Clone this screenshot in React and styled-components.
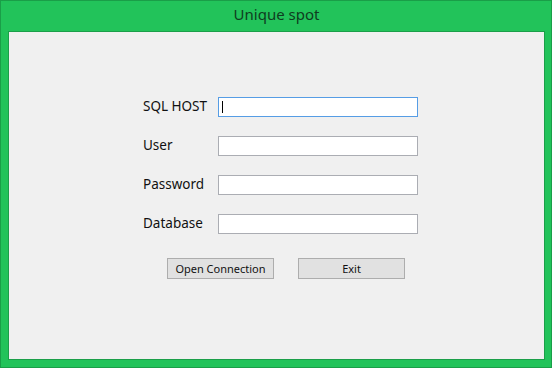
import React from 'react'
import styled, { createGlobalStyle } from 'styled-components'

const Global = createGlobalStyle`
  html, body {
    margin: 0;
    padding: 0;
    background: #22c35a;
  }
  * { box-sizing: border-box; }
`

const Window = styled.div`
  width: 552px;
  height: 368px;
  background: #22c35a;
  border: 1px solid #1a9e48;
  display: flex;
  flex-direction: column;
  padding: 0 6px 7px 7px;
  font-family: "Noto Sans", "Open Sans", sans-serif;
`

const TitleBar = styled.div`
  height: 30px;
  display: flex;
  align-items: center;
  justify-content: center;
  font-size: 15px;
  color: #0f3d1f;
  padding-bottom: 4px;
`

const Client = styled.div`
  flex: 1;
  background: #f0f0f0;
  border: 1px solid #1b9f49;
  padding: 65px 0 0 134px;
`

const Form = styled.div`
  display: grid;
  grid-template-columns: 75px 200px;
  grid-auto-rows: 20px;
  row-gap: 19px;
  align-items: center;
`

const Label = styled.label`
  font-size: 13.5px;
  color: #111;
  line-height: 20px;
  margin-top: -2px;
`

const Input = styled.div`
  height: 20px;
  background: #fff;
  border: 1px solid ${p => (p.$focused ? '#569de5' : '#abadb3')};
  position: relative;
`

const Caret = styled.span`
  position: absolute;
  left: 3px;
  top: 3px;
  width: 1px;
  height: 12px;
  background: #000;
`

const Buttons = styled.div`
  display: flex;
  gap: 24px;
  margin: 24px 0 0 24px;
`

const Button = styled.button`
  width: 107px;
  height: 21px;
  background: #e1e1e1;
  border: 1px solid #adadad;
  font-family: "Noto Sans", "Open Sans", sans-serif;
  font-size: 11px;
  color: #111;
  padding: 0;
`

const fields = ['SQL HOST', 'User', 'Password', 'Database']

export default function App() {
  return (
    <>
      <Global />
      <Window>
        <TitleBar>Unique spot</TitleBar>
        <Client>
          <Form>
            {fields.map((f, i) => (
              <React.Fragment key={f}>
                <Label>{f}</Label>
                <Input $focused={i === 0}>{i === 0 && <Caret />}</Input>
              </React.Fragment>
            ))}
          </Form>
          <Buttons>
            <Button>Open Connection</Button>
            <Button>Exit</Button>
          </Buttons>
        </Client>
      </Window>
    </>
  )
}
